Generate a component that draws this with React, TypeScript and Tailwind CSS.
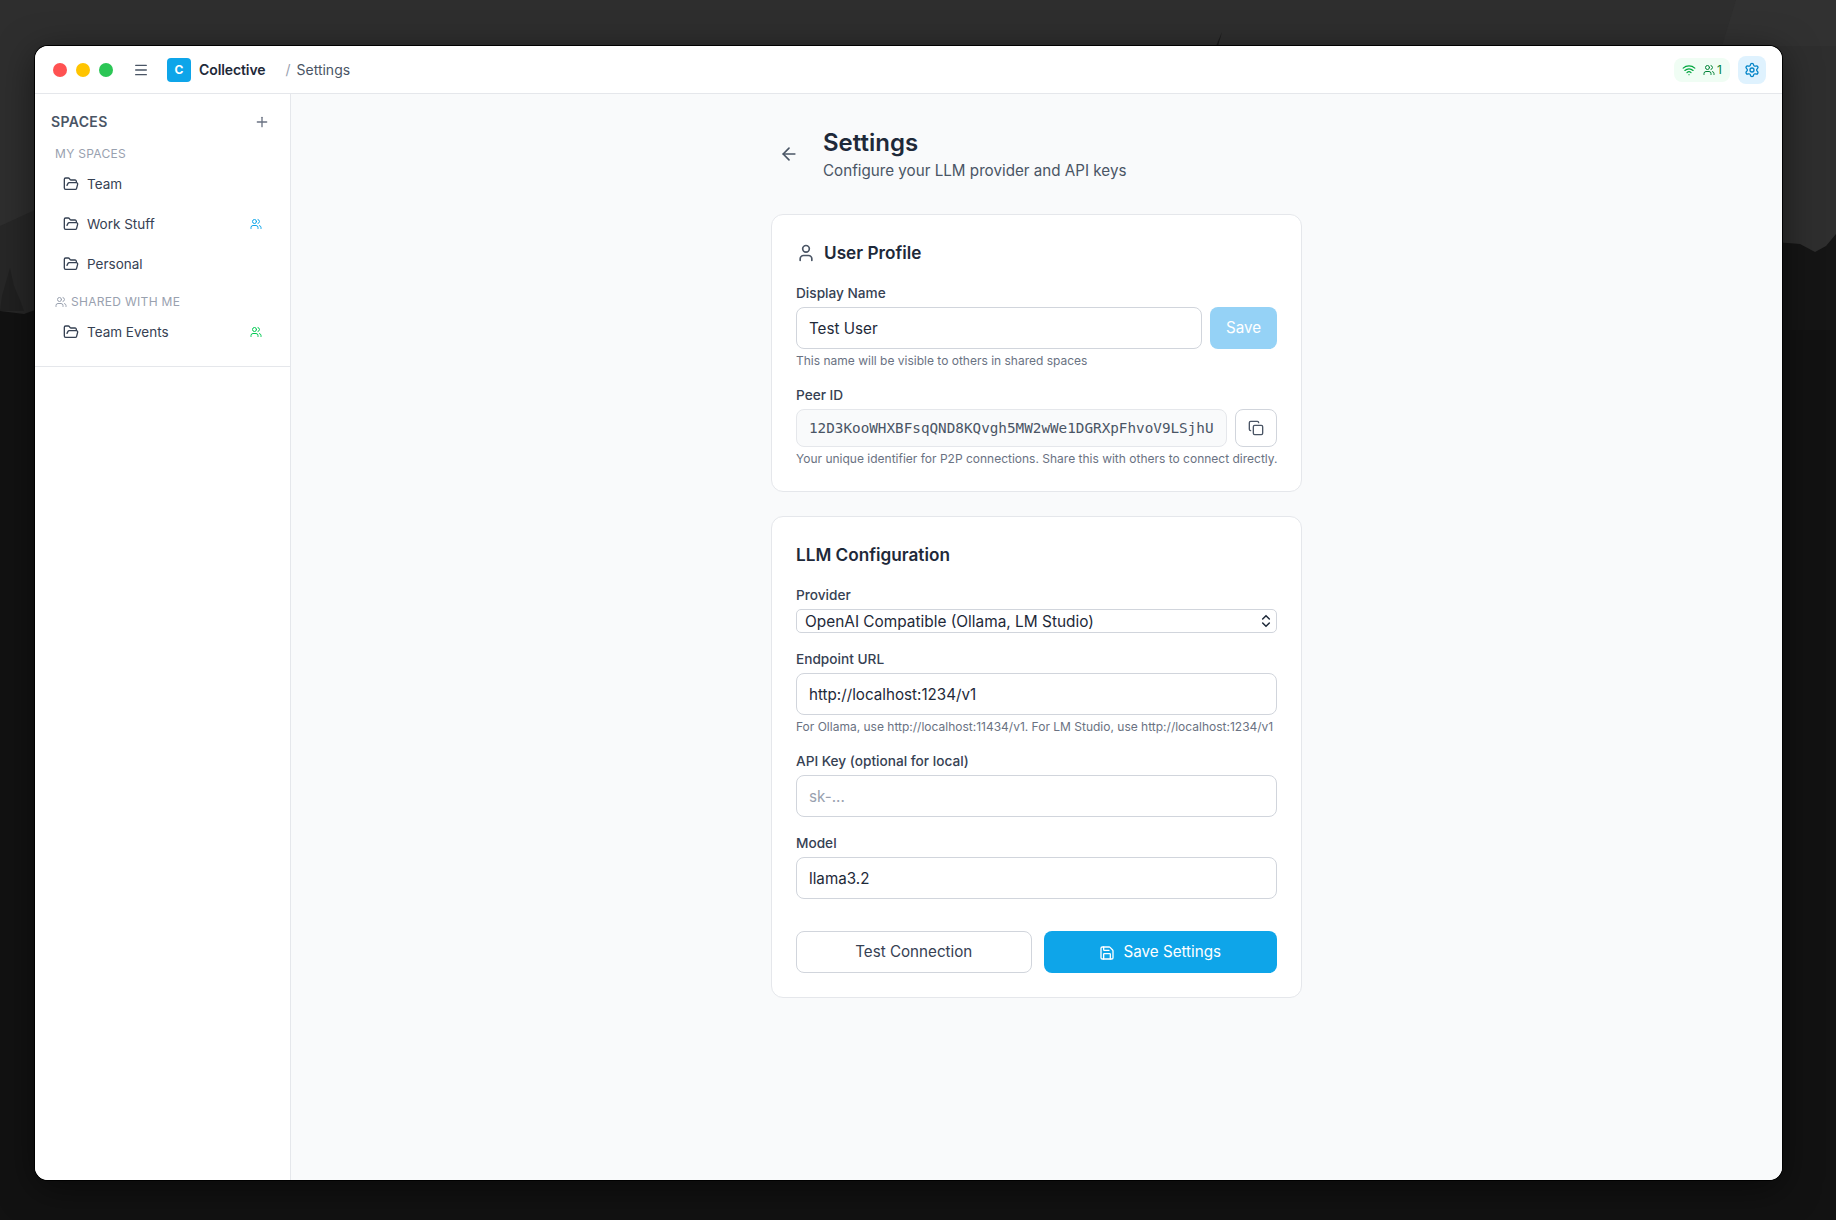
import React from "react";
import { ArrowLeft, ChevronsUpDown, Copy, FolderOpen, Menu, Plus, Save, Settings, User, Users, Wifi } from "lucide-react";

function Wallpaper() {
  return (
    <svg className="absolute inset-0" width="1836" height="1220" viewBox="0 0 1836 1220">
      <rect width="1836" height="1220" fill="#121212" />
      <rect width="1836" height="330" fill="#2e2e2e" />
      <path d="M0 226 L35 210 L60 200 L60 330 L0 330 Z" fill="#272727" />
      <path d="M0 311 L2 296 L6 282 L10 268 L14 286 L20 300 L24 311 Z" fill="#202020" />
      <path d="M0 311 L24 314 L35 310 L60 310 L60 330 L0 330 Z" fill="#121212" />
      <path d="M1776 242 L1800 244 L1815 252 L1826 246 L1836 234 L1836 330 L1776 330 Z" fill="#151515" />
      <path d="M1216 46 L1222 32 L1218 46 Z" fill="#1a1a1a" />
      <path d="M1736 0 L1836 0 L1836 46 L1722 46 Z" fill="#313131" />
    </svg>
  );
}

function Space({ name, badge }: { name: string; badge?: string }) {
  return (
    <div className="flex h-10 items-center gap-2 pr-[28px] pl-[28px] text-[13.5px] text-gray-700">
      <FolderOpen className="h-4 w-4 shrink-0 text-gray-700" />
      <span className="flex-1">{name}</span>
      {badge === "blue" && <Users className="h-3 w-3 text-[#0ea5e9]" />}
      {badge === "green" && <Users className="h-3 w-3 text-green-500" />}
    </div>
  );
}

function Label({ children }: { children: React.ReactNode }) {
  return <label className="mb-1 block text-[13.65px] leading-5 font-medium text-gray-700">{children}</label>;
}

function Help({ children }: { children: React.ReactNode }) {
  return <p className="mt-1 text-xs leading-4 whitespace-nowrap text-gray-500">{children}</p>;
}

const inputClass =
  "block h-[42px] w-full rounded-lg border border-gray-300 bg-white px-3 text-[15.2px] text-gray-800 placeholder:text-gray-400 outline-none";

export default function App() {
  return (
    <div className="relative h-[1220px] w-[1836px] overflow-hidden bg-[#121212] pt-[46px] pl-[35px] font-['Inter',sans-serif]">
      <Wallpaper />
      <div className="relative flex h-[1134px] w-[1747px] flex-col overflow-hidden rounded-[13px] bg-white shadow-[0_0_0_1px_#000,0_8px_36px_rgba(0,0,0,0.5)]">
        <header className="flex h-12 shrink-0 items-center border-b border-gray-200 bg-white pr-4 pl-[18px]">
          <div className="flex items-center gap-[9px]">
            <span className="h-3.5 w-3.5 rounded-full bg-[#ff5252]" />
            <span className="h-3.5 w-3.5 rounded-full bg-[#ffc400]" />
            <span className="h-3.5 w-3.5 rounded-full bg-[#2bc655]" />
          </div>
          <Menu className="ml-5 h-4 w-4 text-gray-600" />
          <div className="ml-[18px] flex h-6 w-6 items-center justify-center rounded-[4px] bg-[#0ea5e9] text-xs font-bold text-white">C</div>
          <span className="ml-2 text-sm font-semibold tracking-[-0.1px] text-gray-800">Collective</span>
          <span className="ml-5 text-sm text-gray-400">/</span>
          <span className="ml-[6px] text-sm text-gray-600">Settings</span>
          <div className="ml-auto flex items-center gap-2">
            <div className="flex h-6 items-center gap-[7px] rounded-lg bg-green-50 px-2 text-xs text-green-700">
              <Wifi className="h-3.5 w-3.5 text-green-600" />
              <div className="flex items-center gap-[2px]">
                <Users className="h-3 w-3" />
                <span>1</span>
              </div>
            </div>
            <div className="flex h-7 w-7 items-center justify-center rounded-lg bg-sky-100 text-[#0284c7]">
              <Settings className="h-4 w-4" />
            </div>
          </div>
        </header>
        <div className="flex min-h-0 flex-1">
          <aside className="w-64 shrink-0 border-r border-gray-200 bg-white">
            <div className="border-b border-gray-200 pb-[14px]">
              <div className="mt-[20px] flex h-[16px] items-center justify-between pr-[20px] pl-4">
                <span className="text-sm font-semibold tracking-wide text-gray-600">SPACES</span>
                <Plus className="h-4 w-4 text-gray-500" />
              </div>
              <div className="mt-[16px] pl-[20px] text-xs leading-4 tracking-wide text-gray-400">MY SPACES</div>
              <div className="mt-[2px]">
                <Space name="Team" />
                <Space name="Work Stuff" badge="blue" />
                <Space name="Personal" />
              </div>
              <div className="mt-[10px] flex items-center gap-1 pl-[20px] text-xs leading-4 tracking-wide text-gray-400">
                <Users className="h-3 w-3" />
                <span>SHARED WITH ME</span>
              </div>
              <div className="mt-[2px]">
                <Space name="Team Events" badge="green" />
              </div>
            </div>
          </aside>
          <main className="flex-1 bg-gray-50 py-8">
            <div className="mx-auto w-[531px]">
              <div className="mb-8 flex items-center gap-4">
                <div className="flex h-9 w-9 items-center justify-center">
                  <ArrowLeft className="h-5 w-5 text-gray-600" />
                </div>
                <div>
                  <h1 className="h-8 pt-[1px] text-2xl leading-8 font-semibold text-gray-800">Settings</h1>
                  <p className="h-6 pt-[1px] text-[15.2px] leading-6 text-gray-600">Configure your LLM provider and API keys</p>
                </div>
              </div>

              <section className="mb-6 rounded-xl border border-gray-200 bg-white p-6">
                <div className="mb-4 flex items-center gap-2">
                  <User className="h-5 w-5 text-gray-600" />
                  <h2 className="text-[17.2px] leading-7 font-semibold text-gray-800">User Profile</h2>
                </div>
                <Label>Display Name</Label>
                <div className="flex gap-2">
                  <input className={inputClass} readOnly value="Test User" />
                  <button className="h-[42px] w-[67px] shrink-0 rounded-lg bg-[#95d2f6] pt-[1px] text-[15.2px] text-white">Save</button>
                </div>
                <Help>This name will be visible to others in shared spaces</Help>
                <div className="mt-4">
                  <Label>Peer ID</Label>
                  <div className="flex gap-2">
                    <input
                      className="block h-[38px] min-w-0 flex-1 rounded-lg border border-gray-200 bg-gray-50 px-3 font-['DejaVu_Sans_Mono',monospace] text-[14.3px] text-gray-600 outline-none"
                      readOnly
                      value="12D3KooWHXBFsqQND8KQvgh5MW2wWe1DGRXpFhvoV9LSjhUaXyZ"
                    />
                    <button className="flex h-[38px] w-[42px] shrink-0 items-center justify-center rounded-lg border border-gray-300 bg-white text-gray-600">
                      <Copy className="h-4 w-4" />
                    </button>
                  </div>
                  <Help>Your unique identifier for P2P connections. Share this with others to connect directly.</Help>
                </div>
              </section>

              <section className="rounded-xl border border-gray-200 bg-white p-6">
                <h2 className="mb-4 text-[17.2px] leading-7 font-semibold text-gray-800">LLM Configuration</h2>
                <Label>Provider</Label>
                <div className="relative">
                  <select className="block h-6 w-full appearance-none rounded-[5px] border border-gray-300 bg-white pt-[1px] pl-2 text-[15.4px] leading-5 text-gray-800 outline-none">
                    <option>OpenAI Compatible (Ollama, LM Studio)</option>
                  </select>
                  <ChevronsUpDown className="pointer-events-none absolute top-[4px] right-[3px] h-4 w-4 text-gray-800" strokeWidth={2.25} />
                </div>
                <div className="mt-4">
                  <Label>Endpoint URL</Label>
                  <input className={inputClass} readOnly value="http://localhost:1234/v1" />
                  <Help>For Ollama, use http://localhost:11434/v1. For LM Studio, use http://localhost:1234/v1</Help>
                </div>
                <div className="mt-4">
                  <Label>API Key (optional for local)</Label>
                  <input className={inputClass} readOnly placeholder="sk-..." />
                </div>
                <div className="mt-4">
                  <Label>Model</Label>
                  <input className={inputClass} readOnly value="llama3.2" />
                </div>
                <div className="mt-8 flex gap-3">
                  <button className="h-[42px] flex-1 rounded-lg border border-gray-300 bg-white pt-[1px] text-[15.2px] text-gray-700">Test Connection</button>
                  <button className="flex h-[42px] flex-1 items-center justify-center gap-2 rounded-lg bg-[#0ea5e9] pt-[1px] text-[15.2px] text-white">
                    <Save className="h-4 w-4" />
                    Save Settings
                  </button>
                </div>
              </section>
            </div>
          </main>
        </div>
      </div>
    </div>
  );
}
